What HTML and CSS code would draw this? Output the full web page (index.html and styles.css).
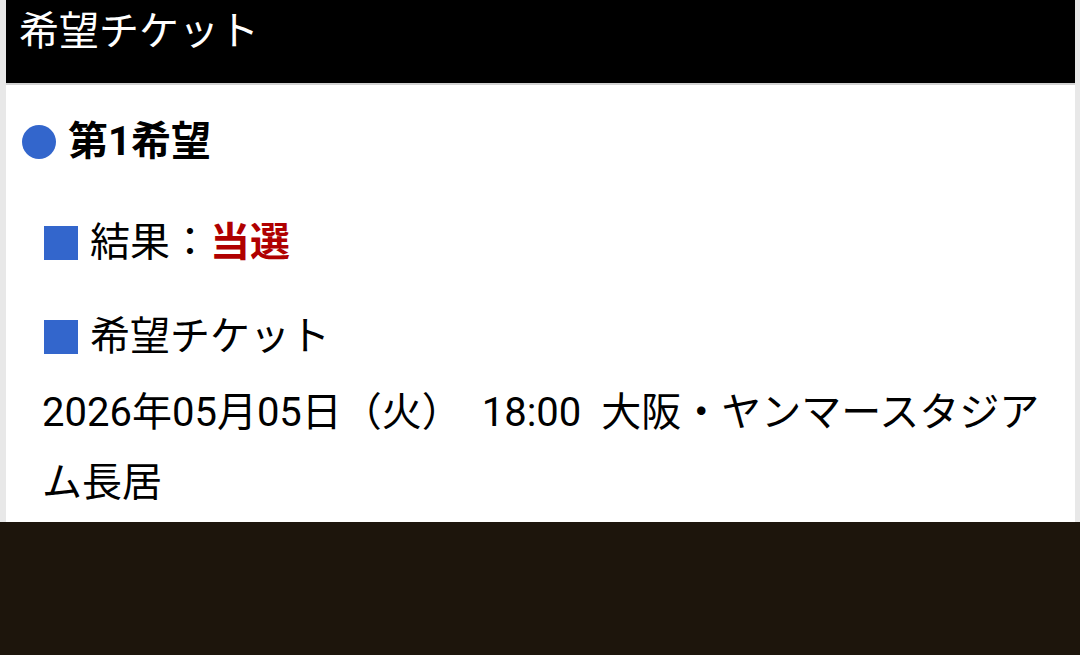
FILE: index.html
```html
<!DOCTYPE html>
<html lang="ja">
<head>
<meta charset="utf-8">
<title>希望チケット</title>
<link rel="stylesheet" href="styles.css">
</head>
<body>
<div class="page">
  <header class="bar"><h1 class="bar-title">希望チケット</h1></header>
  <main class="content">
    <h2 class="choice"><span class="dot"></span>第1希望</h2>
    <div class="detail">
      <p class="label"><span class="sq"></span>結果：<span class="win">当選</span></p>
      <p class="label label-ticket"><span class="sq"></span>希望チケット</p>
      <p class="value">2026年05月05日（火）&nbsp; 18:00 &nbsp;大阪・ヤンマースタジアム長居</p>
    </div>
  </main>
</div>
<footer class="navbar"></footer>
</body>
</html>
```

FILE: styles.css
```css
html, body {
  margin: 0;
  padding: 0;
}
body {
  background: #e8e8e8;
  font-family: Roboto, "Noto Sans CJK JP", sans-serif;
  color: #000;
  height: 655px;
  overflow: hidden;
  display: flex;
  flex-direction: column;
}
.page {
  margin: 0 5px 0 6px;
  background: #fff;
  flex: 0 0 522px;
  overflow: hidden;
}
.bar {
  box-sizing: border-box;
  background: #000;
  height: 85px;
  border-bottom: 2px solid #d2d2d2;
  padding: 3px 0 0 13px;
}
.bar-title {
  margin: 0;
  color: #fff;
  font-size: 40px;
  font-weight: normal;
  line-height: 58px;
}
.content {
  padding: 0 20px 0 16px;
}
.choice {
  margin: 37px 0 0;
  display: flex;
  align-items: center;
  gap: 12px;
  font-size: 40px;
  font-weight: bold;
  line-height: 40px;
  height: 40px;
}
.dot {
  width: 34px;
  height: 34px;
  border-radius: 50%;
  background: #3366cc;
  flex: none;
}
.detail {
  padding-left: 20px;
}
.label {
  margin: 61px 0 0;
  display: flex;
  align-items: center;
  font-size: 40px;
  line-height: 40px;
  height: 40px;
}
.label-ticket {
  margin-top: 54px;
}
.sq {
  width: 34px;
  height: 34px;
  margin-left: 2px;
  margin-right: 12px;
  background: #3366cc;
  flex: none;
}
.win {
  color: #b00000;
  font-weight: bold;
}
.value {
  margin: 21px 0 0;
  font-size: 40px;
  line-height: 70px;
}
.navbar {
  flex: 1;
  background: #1d150c;
}
```
